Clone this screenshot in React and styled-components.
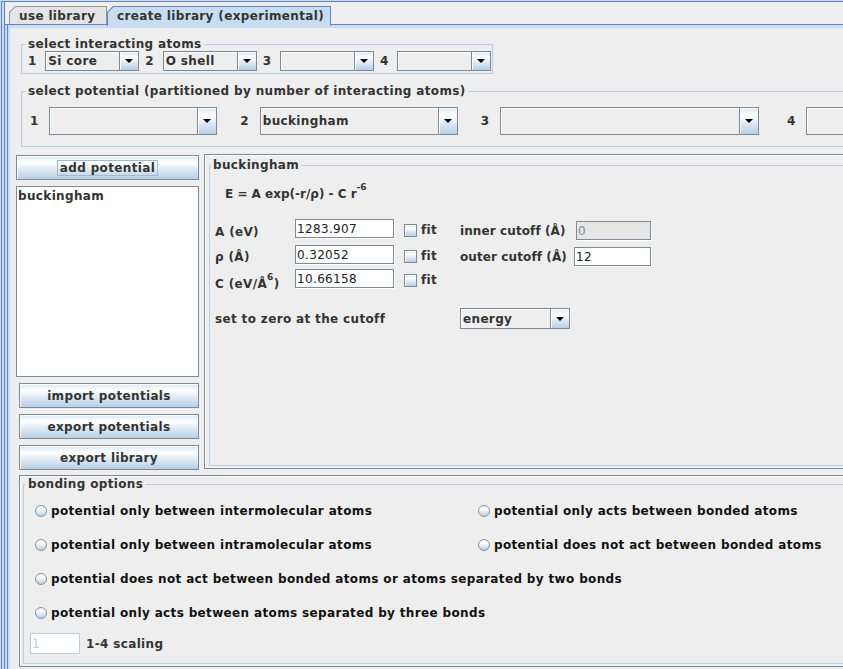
import React from 'react';
import styled, { createGlobalStyle } from 'styled-components';

const FONT = `"DejaVu Sans", "Liberation Sans", Verdana, sans-serif`;
const GRAD = 'linear-gradient(to bottom, #dde8f3 0%, #ffffff 30%, #dde8f3 60%, #b8cfe5 100%)';
const EDGE = '#7a8a99';
const TITLE = '#b8cfe5';

const Global = createGlobalStyle`
  *, *::before, *::after { box-sizing: border-box; }
  html, body { margin: 0; padding: 0; background: #eeeeee; overflow: hidden; }
  body { font-family: ${FONT}; font-size: 12px; }
`;

const Screen = styled.div`
  width: 843px;
  height: 669px;
  overflow: hidden;
  background: #c8ddf2;
  padding: 1px 0 0 1px;
  font-family: ${FONT};
  font-size: 12px;
  line-height: 14px;
  letter-spacing: 0.35px;
  color: #333333;
`;

const Frame = styled.div`
  width: 1100px;
  height: 700px;
  border-top: 1px solid #6382bf;
  border-left: 1px solid #6382bf;
  padding-left: 2px;
  background: #c8ddf2;
`;

const Inner = styled.div`
  height: 100%;
  border-left: 1px solid #6382bf;
  background: #eeeeee;
  display: flex;
  flex-direction: column;
`;

const TabStrip = styled.div`
  height: 22px;
  display: flex;
  align-items: flex-end;
  padding-left: 4px;
  flex: none;
`;

const Tab = styled.div`
  position: relative;
  z-index: ${p => (p.$selected ? 1 : 0)};
  width: ${p => p.$w}px;
  height: ${p => (p.$selected ? 20 : 18)}px;
  margin-bottom: ${p => (p.$selected ? -2 : 0)}px;
  padding: 1px 1px 0 1px;
  display: flex;
  flex: none;
  background: ${p => (p.$selected ? '#6382bf' : '#8d99a6')};
  clip-path: polygon(0 6px, 6px 0, 100% 0, 100% 100%, 0 100%);
`;

const TabFace = styled.div`
  flex: 1;
  padding: 2px 0 0 9px;
  background: ${p => (p.$selected ? '#c8ddf2' : '#e4e4e4')};
  clip-path: polygon(0 5.5px, 5.5px 0, 100% 0, 100% 100%, 0 100%);
  font-weight: bold;
  color: #333333;
  white-space: nowrap;
`;

const TabBody = styled.div`
  flex: 1;
  border-top: 1px solid #6382bf;
  padding-left: 2px;
  background: #c8ddf2;
  display: flex;
`;

const ContentFrame = styled.div`
  flex: 1;
  border-left: 1px solid #6382bf;
  padding: 3px 0 0 2px;
  background: #c8ddf2;
  display: flex;
`;

const Panel = styled.div`
  flex: 1;
  background: #eeeeee;
  display: flex;
  flex-direction: column;
`;

const Group = styled.fieldset`
  margin: ${p => p.$top ?? 0}px 0 0 ${p => p.$left ?? 0}px;
  width: ${p => (p.$width ? `${p.$width}px` : 'auto')};
  flex: ${p => (p.$grow ? 1 : 'none')};
  padding: 0;
  min-width: 0;
  border: 1px solid ${TITLE};
`;

const Legend = styled.legend`
  margin-left: ${p => p.$inset}px;
  padding: 0 2px;
  font-weight: bold;
  line-height: 14px;
  color: #333333;
`;

const ComboRow = styled.div`
  display: flex;
  align-items: center;
  padding: ${p => p.$pad};
`;

const Index = styled.span`
  font-weight: bold;
  color: #333333;
  letter-spacing: 0;
  margin-right: ${p => p.$gap}px;
  flex: none;
`;

const Combo = styled.div`
  flex: none;
  display: flex;
  width: ${p => p.$w}px;
  height: ${p => p.$h}px;
  margin: ${p => p.$top ?? 0}px ${p => p.$gap ?? 0}px 0 0;
  border: 1px solid ${EDGE};
  background: #eeeeee;
`;

const ComboText = styled.div`
  flex: 1;
  display: flex;
  align-items: center;
  padding-left: 2px;
  box-shadow: inset 1px 1px 0 #ffffff;
  font-weight: bold;
  color: #333333;
  white-space: nowrap;
  overflow: hidden;
`;

const ComboButton = styled.div`
  width: 19px;
  flex: none;
  border-left: 1px solid ${EDGE};
  background: ${GRAD};
  box-shadow: inset 1px 1px 0 #ffffff;
  display: flex;
  align-items: center;
  justify-content: center;
`;

const Middle = styled.div`
  display: flex;
  margin-top: 7px;
  flex: none;
`;

const LeftColumn = styled.div`
  width: 183px;
  margin: 1px 0 0 6px;
  display: flex;
  flex-direction: column;
  flex: none;
`;

const Button = styled.div`
  height: 25px;
  width: ${p => p.$w}px;
  margin: ${p => p.$top ?? 0}px 0 0 ${p => p.$left ?? 0}px;
  border: 1px solid ${EDGE};
  background: ${GRAD};
  box-shadow: inset 1px 1px 0 #ffffff;
  display: flex;
  align-items: center;
  justify-content: center;
  font-weight: bold;
  color: #333333;
  white-space: nowrap;
`;

const Focus = styled.span`
  border: 1px solid #a3b8cc;
  padding: 0 2px;
  line-height: 14px;
`;

const List = styled.div`
  margin-top: 6px;
  height: 191px;
  background: #ffffff;
  border: 1px solid ${EDGE};
  padding: 1px;
`;

const ListItem = styled.div`
  font-weight: bold;
  color: #333333;
  line-height: 16px;
`;

const Boxed = styled.div`
  border: 1px solid ${EDGE};
  box-shadow: inset 1px 1px 0 #ffffff;
  display: flex;
  flex-direction: column;
  margin: ${p => p.$margin};
  height: ${p => p.$h}px;
  padding: ${p => p.$pad};
  flex: ${p => (p.$grow ? 1 : 'none')};
`;

const Formula = styled.div`
  margin: 15px 0 0 15px;
  font-weight: bold;
  letter-spacing: 0;
  color: #333333;
  white-space: nowrap;
`;

const Sup = styled.span`
  font-size: 9px;
  vertical-align: 8px;
  line-height: 0;
`;

const ParamRow = styled.div`
  display: flex;
  align-items: flex-start;
  height: ${p => p.$h ?? 20}px;
  margin: ${p => p.$top}px 0 0 5px;
`;

const ParamLabel = styled.div`
  width: ${p => p.$w ?? 80}px;
  flex: none;
  margin-top: ${p => p.$dy}px;
  font-weight: bold;
  color: #333333;
  white-space: nowrap;
`;

const FIELD_STYLES = {
  normal: { bg: '#ffffff', border: EDGE, shadow: '1px 1px 0 #ffffff', color: '#222222' },
  readonly: { bg: '#e6e6e6', border: EDGE, shadow: '1px 1px 0 #ffffff', color: '#8a8a8a' },
  disabled: { bg: '#ffffff', border: TITLE, shadow: 'none', color: '#b8cfe5' },
};

const Field = styled.div`
  flex: none;
  width: ${p => p.$w}px;
  height: ${p => p.$h ?? 19}px;
  margin-top: ${p => p.$dy ?? 0}px;
  border: 1px solid ${p => FIELD_STYLES[p.$kind ?? 'normal'].border};
  box-shadow: ${p => FIELD_STYLES[p.$kind ?? 'normal'].shadow};
  background: ${p => FIELD_STYLES[p.$kind ?? 'normal'].bg};
  color: ${p => FIELD_STYLES[p.$kind ?? 'normal'].color};
  padding-left: 1px;
  display: flex;
  align-items: center;
  white-space: nowrap;
`;

const CheckCell = styled.div`
  width: 56px;
  margin-left: 10px;
  flex: none;
  display: flex;
  align-items: flex-start;
`;

const CheckBox = styled.span`
  width: 13px;
  height: 13px;
  margin-top: 5px;
  flex: none;
  border: 1px solid ${EDGE};
  background: ${GRAD};
  box-shadow: inset 1px 1px 0 #ffffff;
`;

const CheckText = styled.span`
  margin: 4px 0 0 4px;
  font-weight: bold;
  color: #333333;
`;

const Cutoff = styled.div`
  width: 191px;
  flex: none;
  display: flex;
  justify-content: space-between;
  align-items: flex-start;
`;

const CutoffLabel = styled.span`
  margin-top: 5px;
  font-weight: bold;
  letter-spacing: 0.1px;
  color: #333333;
  white-space: nowrap;
`;

const RadioGrid = styled.div`
  display: grid;
  grid-template-columns: 443px 1fr;
  grid-auto-rows: 34px;
  margin: 3px 0 0 11px;
`;

const RadioItem = styled.div`
  grid-column: ${p => (p.$span ? '1 / -1' : 'auto')};
  display: flex;
  align-items: center;
  gap: 4px;
  font-weight: bold;
  color: #111111;
  white-space: nowrap;
`;

const RadioDot = styled.span`
  width: 12px;
  height: 12px;
  flex: none;
  border-radius: 50%;
  border: 1px solid #8592a0;
  background: linear-gradient(to bottom, #eef3f9 0%, #ffffff 30%, #dde8f3 60%, #b8cfe5 100%);
`;

const ScaleRow = styled.div`
  display: flex;
  align-items: center;
  gap: 6px;
  margin: 3px 0 9px 6px;
`;

const ScaleLabel = styled.span`
  font-weight: bold;
  color: #333333;
`;

const Arrow = () => (
  <svg width="8" height="4" viewBox="0 0 8 4" aria-hidden="true">
    <path d="M0 0H8L4 4Z" fill="#000000" />
  </svg>
);

const ComboBox = ({ value, w, h, gap, top }) => (
  <Combo $w={w} $h={h} $gap={gap} $top={top}>
    <ComboText>{value}</ComboText>
    <ComboButton>
      <Arrow />
    </ComboButton>
  </Combo>
);

const atoms = [
  { n: '1', v: 'Si core' },
  { n: '2', v: 'O shell' },
  { n: '3', v: '' },
  { n: '4', v: '' },
];

const potentials = [
  { n: '1', v: '', w: 168, gap: 23 },
  { n: '2', v: 'buckingham', w: 198, gap: 23 },
  { n: '3', v: '', w: 259, gap: 28 },
  { n: '4', v: '', w: 259, gap: 0 },
];

const radios = [
  { t: 'potential only between intermolecular atoms' },
  { t: 'potential only acts between bonded atoms' },
  { t: 'potential only between intramolecular atoms' },
  { t: 'potential does not act between bonded atoms' },
  { t: 'potential does not act between bonded atoms or atoms separated by two bonds', span: true },
  { t: 'potential only acts between atoms separated by three bonds', span: true },
];

export default function App() {
  return (
    <>
      <Global />
      <Screen>
        <Frame>
          <Inner>
            <TabStrip>
              <Tab $w={98}>
                <TabFace>use library</TabFace>
              </Tab>
              <Tab $w={224} $selected>
                <TabFace $selected>create library (experimental)</TabFace>
              </Tab>
            </TabStrip>
            <TabBody>
              <ContentFrame>
                <Panel>
                  <Group $top={9} $left={11} $width={472}>
                    <Legend $inset={4}>select interacting atoms</Legend>
                    <ComboRow $pad="0 0 2px 6px">
                      {atoms.map(a => (
                        <React.Fragment key={a.n}>
                          <Index $gap={9}>{a.n}</Index>
                          <ComboBox value={a.v} w={94} h={20} gap={6} />
                        </React.Fragment>
                      ))}
                    </ComboRow>
                  </Group>

                  <Group $top={10} $left={11}>
                    <Legend $inset={4}>select potential (partitioned by number of interacting atoms)</Legend>
                    <ComboRow $pad="9px 0 11px 8px">
                      {potentials.map(p => (
                        <React.Fragment key={p.n}>
                          <Index $gap={11}>{p.n}</Index>
                          <ComboBox value={p.v} w={p.w} h={28} gap={p.gap} />
                        </React.Fragment>
                      ))}
                    </ComboRow>
                  </Group>

                  <Middle>
                    <LeftColumn>
                      <Button $w={183}>
                        <Focus>add potential</Focus>
                      </Button>
                      <List>
                        <ListItem>buckingham</ListItem>
                      </List>
                      <Button $w={180} $top={6} $left={3}>import potentials</Button>
                      <Button $w={180} $top={6} $left={3}>export potentials</Button>
                      <Button $w={180} $top={6} $left={3}>export library</Button>
                    </LeftColumn>

                    <Boxed $margin="0 0 0 5px" $h={315} $pad="3px 0 2px 4px" $grow>
                      <Group $grow>
                        <Legend $inset={1}>buckingham</Legend>
                        <Formula>
                          E = A exp(-r/ρ) - C r<Sup>-6</Sup>
                        </Formula>

                        <ParamRow $top={18}>
                          <ParamLabel $dy={6}>A (eV)</ParamLabel>
                          <Field $w={99}>1283.907</Field>
                          <CheckCell>
                            <CheckBox />
                            <CheckText>fit</CheckText>
                          </CheckCell>
                          <Cutoff>
                            <CutoffLabel>inner cutoff (Å)</CutoffLabel>
                            <Field $w={75} $dy={2} $kind="readonly">0</Field>
                          </Cutoff>
                        </ParamRow>

                        <ParamRow $top={6}>
                          <ParamLabel $dy={5}>ρ (Å)</ParamLabel>
                          <Field $w={99}>0.32052</Field>
                          <CheckCell>
                            <CheckBox />
                            <CheckText>fit</CheckText>
                          </CheckCell>
                          <Cutoff>
                            <CutoffLabel>outer cutoff (Å)</CutoffLabel>
                            <Field $w={77} $dy={2}>12</Field>
                          </Cutoff>
                        </ParamRow>

                        <ParamRow $top={4}>
                          <ParamLabel $dy={8}>
                            C (eV/Å<Sup>6</Sup>)
                          </ParamLabel>
                          <Field $w={99}>10.66158</Field>
                          <CheckCell>
                            <CheckBox />
                            <CheckText>fit</CheckText>
                          </CheckCell>
                        </ParamRow>

                        <ParamRow $top={19} $h={21}>
                          <ParamLabel $w={245} $dy={4}>set to zero at the cutoff</ParamLabel>
                          <ComboBox value="energy" w={110} h={21} />
                        </ParamRow>
                      </Group>
                    </Boxed>
                  </Middle>

                  <Boxed $margin="5px 0 0 9px" $h={192} $pad="1px 0 2px 3px">
                    <Group $grow>
                      <Legend $inset={2}>bonding options</Legend>
                      <RadioGrid>
                        {radios.map(r => (
                          <RadioItem key={r.t} $span={r.span}>
                            <RadioDot />
                            {r.t}
                          </RadioItem>
                        ))}
                      </RadioGrid>
                      <ScaleRow>
                        <Field $w={50} $h={21} $kind="disabled">1</Field>
                        <ScaleLabel>1-4 scaling</ScaleLabel>
                      </ScaleRow>
                    </Group>
                  </Boxed>
                </Panel>
              </ContentFrame>
            </TabBody>
          </Inner>
        </Frame>
      </Screen>
    </>
  );
}
